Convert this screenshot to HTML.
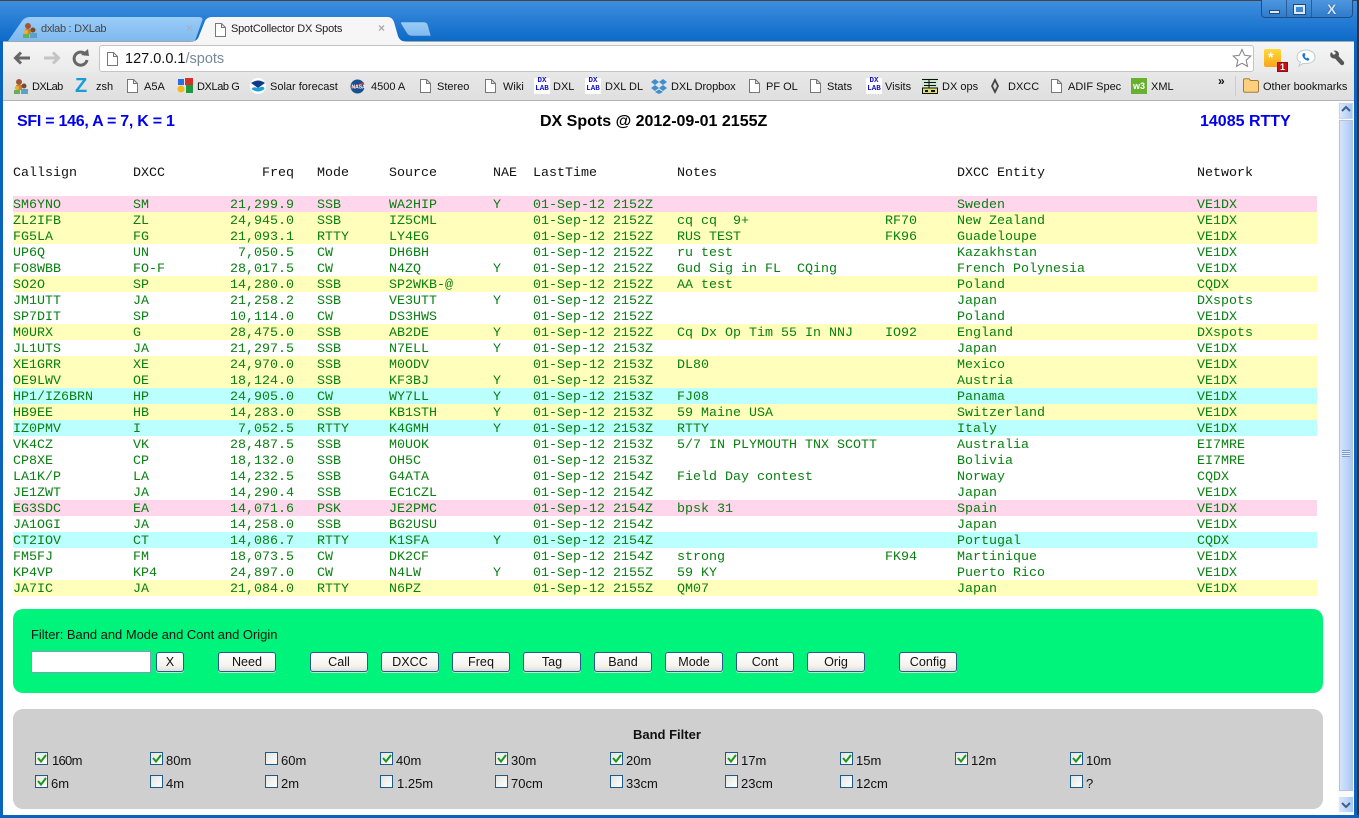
<!DOCTYPE html>
<html><head><meta charset="utf-8"><title>SpotCollector DX Spots</title>
<style>
html,body{margin:0;padding:0;width:1359px;height:818px;overflow:hidden;background:#fff}
body{position:relative;font-family:"Liberation Sans",sans-serif}
.a{position:absolute}
#top{left:0;top:0;width:1359px;height:42px;background:linear-gradient(#3f8ede,#0a69c8);border-top:1px solid #444;box-sizing:border-box}
#tool{left:3px;top:41px;width:1351px;height:31px;background:linear-gradient(#f5f5f5,#ebebeb);border-top:1px solid #9aa;box-sizing:border-box}
#bm{left:3px;top:72px;width:1351px;height:29px;background:linear-gradient(#e8e8e8,#dfdfdf);border-bottom:1px solid #b4b4b4;box-sizing:border-box}
.fr{background:#0a63bd;top:41px;bottom:0;width:3px}
.bm{position:absolute;top:80px;font-size:11px;line-height:14px;color:#111;white-space:nowrap}
.doc{position:absolute}
.dx{position:absolute;top:78px;width:16px;height:16px;background:#fff;color:#11c;font:bold 7.5px/7.5px "Liberation Mono",monospace;text-align:center}
.r{position:absolute;left:13px;width:1304px;height:16px;font:13.33px/16px "Liberation Mono",monospace;color:#087f10;white-space:pre}
.r span{position:absolute;top:2px}
.h{color:#111}
.c1{left:0}.c2{left:120px}.c3{left:204px;width:77px;text-align:right}.c4{left:304px}.c5{left:376px}.c6{left:480px}.c7{left:520px}.c8{left:664px}.c9{left:872px}.c10{left:944px}.c11{left:1184px}
.p{background:#ffd6ec}.y{background:#ffffbb}.b{background:#bbffff}
.btn{position:absolute;top:652px;width:58px;height:20px;box-sizing:border-box;border:1px solid #2a5a8a;border-radius:3px;background:linear-gradient(#fff,#f5f3ee 70%,#e2ded6);box-shadow:0 1px 0 #bfeed6;font-size:12.6px;line-height:19px;text-align:center;color:#111}
.cb{position:absolute;width:13px;height:13px;box-sizing:border-box;border:1px solid #1c5a8a;background:linear-gradient(135deg,#e4e4e0,#fff)}
.cb svg{position:absolute;left:1px;top:0}
.l{position:absolute;font-size:13px;line-height:15px;color:#111;white-space:nowrap}
</style></head><body>
<div class="a" id="top"></div>
<!-- window controls -->
<div class="a" style="left:1261px;top:0;width:92px;height:18px;border:1px solid #1d4f86;border-top:0;border-radius:0 0 4px 4px;box-sizing:border-box;background:linear-gradient(#4f96e0,#2f7ccb)"></div>
<div class="a" style="left:1286px;top:0;width:1px;height:17px;background:#2b5d94"></div>
<div class="a" style="left:1311px;top:0;width:1px;height:17px;background:#2b5d94"></div>
<div class="a" style="left:1269px;top:10px;width:11px;height:4px;background:#dfeaf8;border:1px solid #244a78;box-sizing:border-box"></div>
<div class="a" style="left:1294px;top:5px;width:11px;height:9px;border:2px solid #dfeaf8;outline:1px solid #244a78;box-sizing:border-box"></div>
<div class="a" style="left:1327px;top:1px;font:bold 14px/16px 'Liberation Sans',sans-serif;color:#cfe0f5;text-shadow:0 0 1px #123">X</div>

<div class="a" id="tool"></div>
<div class="a" id="bm"></div>
<!-- tabs -->
<svg class="a" style="left:0;top:0" width="440" height="43" viewBox="0 0 440 43">
<defs><linearGradient id="tg" x1="0" y1="0" x2="0" y2="1"><stop offset="0" stop-color="#9accf7"/><stop offset="1" stop-color="#7fb9f0"/></linearGradient></defs>
<path d="M8 41 L22 21 Q25 17 30 17 L198 17 Q204 17 202 21 L195 41 Z" fill="url(#tg)"/>
<path d="M190 42 Q197 42 199 36 L205 21 Q207 17 212 17 L388 17 Q392 17 394 22 L398 36 Q400 42 408 42 Z" fill="#f6f6f6"/>
<path d="M402 22 L424 22 Q427 22 428 25 L431 36 L412 36 Q408 36 406 32 L401 24 Q400 22 402 22 Z" fill="url(#tg)" stroke="#2d73b8" stroke-width=".6"/>
</svg>
<div class="a" style="left:41px;top:22px;font-size:11px;letter-spacing:-.3px;line-height:14px;color:#444;white-space:nowrap">dxlab : DXLab</div>
<div class="a" style="left:186px;top:21px;font:bold 12px/15px 'Liberation Sans',sans-serif;color:#9ab4cc">×</div>
<svg class="doc" style="left:215px;top:23px" width="11" height="14" viewBox="0 0 11 14"><path d="M.5 .5 H6.5 L10.5 4.5 V13.5 H.5 Z M6.5 .5 V4.5 H10.5" fill="#fff" stroke="#777"/></svg>
<div class="a" style="left:231px;top:22px;font-size:11px;letter-spacing:-.2px;line-height:14px;color:#222;white-space:nowrap">SpotCollector DX Spots</div>
<div class="a" style="left:378px;top:21px;font:bold 12px/15px 'Liberation Sans',sans-serif;color:#aaa">×</div>
<svg class="a" style="left:22px;top:22px" width="16" height="17" viewBox="0 0 16 17"><circle cx="6" cy="4" r="3" fill="#a0553a"/><rect x="3" y="7" width="6" height="5" fill="#c8862a"/><circle cx="11" cy="8" r="2.5" fill="#7a4a2a"/><rect x="8" y="11" width="7" height="5" fill="#5aa0c8"/><circle cx="4" cy="10" r="2.2" fill="#e8b030"/><rect x="1" y="12" width="6" height="4" fill="#60b060"/></svg>

<div class="a fr" style="left:0"></div>
<div class="a fr" style="left:1354px"></div>
<div class="a" style="left:1357px;top:0;bottom:0;width:2px;background:#333"></div>
<div class="a" style="left:0;top:815px;width:1359px;height:3px;background:#0a63bd"></div>
<!-- nav -->
<svg class="a" style="left:10px;top:46px" width="82" height="24" viewBox="0 0 82 24">
<path d="M20 12 H6 M11 6.5 L5.5 12 L11 17.5" fill="none" stroke="#666" stroke-width="3"/>
<path d="M34 12 H48 M43 6.5 L48.5 12 L43 17.5" fill="none" stroke="#c4c4c4" stroke-width="3"/>
<path d="M76 9 A6.5 6.5 0 1 0 77 14" fill="none" stroke="#666" stroke-width="3"/><path d="M71 9 L79 10 L78 3 Z" fill="#666"/>
</svg>
<div class="a" style="left:99px;top:45px;width:1155px;height:27px;background:#fff;border:1px solid #c4c4c4;border-radius:3px;box-sizing:border-box"></div>
<svg class="doc" style="left:107px;top:52px" width="11" height="14" viewBox="0 0 11 14"><path d="M.5 .5 H6.5 L10.5 4.5 V13.5 H.5 Z M6.5 .5 V4.5 H10.5" fill="#fff" stroke="#777"/></svg>
<div class="a" style="left:125px;top:51px;font-size:14.5px;line-height:17px;color:#111">127.0.0.1<span style="color:#789">/spots</span></div>
<svg class="a" style="left:1232px;top:48px" width="20" height="20" viewBox="0 0 20 20"><path d="M10 1.5 L12.6 7.3 L18.8 8 L14.2 12.2 L15.5 18.4 L10 15.2 L4.5 18.4 L5.8 12.2 L1.2 8 L7.4 7.3 Z" fill="#fff" stroke="#888" stroke-width="1.1"/></svg>
<div class="a" style="left:1264px;top:49px;width:17px;height:18px;border-radius:2px;background:linear-gradient(#ffd93a,#f9a51a)"></div>
<div class="a" style="left:1268px;top:50px;font:bold 14px/15px 'Liberation Sans',sans-serif;color:#fff">*</div>
<div class="a" style="left:1277px;top:62px;width:11px;height:10px;background:#c8101a;border:1px solid #811;box-sizing:border-box;font:bold 9px/9px 'Liberation Sans',sans-serif;color:#fff;text-align:center">1</div>
<svg class="a" style="left:1296px;top:49px" width="20" height="18" viewBox="0 0 20 18"><path d="M10 1 C15 1 19 4 19 8 C19 12 15 14.5 10 14.5 L7 14.5 L3 17 L4.5 13 C2 12 1 10 1 8 C1 4 5 1 10 1 Z" fill="#fff" stroke="#bcc" /><path d="M7 4.5 Q5.5 6 7.5 9 Q10 12 12.5 11.5 L13.5 10 L11.5 8.5 L10.5 9.5 Q9 8.5 8.5 7 L9.5 6 L8.5 4 Z" fill="#1670d0"/></svg>
<svg class="a" style="left:1329px;top:50px" width="16" height="17" viewBox="0 0 16 17"><path d="M2 2 L5 5 L7 3 L4.5 .8 Q8 0 9.5 2.5 Q10.5 4.5 9.5 6 L15 12 Q15.5 14 14 15 Q12.5 15.5 11.5 14.5 L6 8.5 Q3.5 9 1.8 7 Q.6 5 2 2 Z" fill="#555"/></svg>

<!-- bookmarks -->
<svg class="a" style="left:13px;top:78px" width="16" height="17" viewBox="0 0 16 17"><circle cx="6" cy="4" r="3" fill="#a0553a"/><rect x="3" y="7" width="6" height="5" fill="#c8862a"/><circle cx="11" cy="8" r="2.5" fill="#7a4a2a"/><rect x="8" y="11" width="7" height="5" fill="#5aa0c8"/><circle cx="4" cy="10" r="2.2" fill="#e8b030"/><rect x="1" y="12" width="6" height="4" fill="#60b060"/></svg>
<span class="bm" style="left:32px;letter-spacing:-.6px">DXLab</span>
<div class="a" style="left:75px;top:75px;font:bold 20px/22px 'Liberation Sans',sans-serif;color:#1a9bd6">Z</div>
<span class="bm" style="left:96px">zsh</span>
<svg class="doc" style="left:127px;top:79px" width="11" height="14" viewBox="0 0 11 14"><path d="M.5 .5 H6.5 L10.5 4.5 V13.5 H.5 Z M6.5 .5 V4.5 H10.5" fill="#fff" stroke="#777"/></svg><span class="bm" style="left:144px">A5A</span>
<svg class="a" style="left:177px;top:77px" width="16" height="17" viewBox="0 0 16 17"><rect x="8" y="1" width="8" height="7" fill="#d6302a"/><rect x="9" y="8" width="7" height="8" fill="#1c9a3e"/><rect x="1" y="2" width="6" height="6" fill="#2a6fe0"/><circle cx="4" cy="12" r="3.5" fill="#f5b818"/></svg>
<span class="bm" style="left:197px;letter-spacing:-.4px">DXLab G</span>
<svg class="a" style="left:250px;top:78px" width="16" height="16" viewBox="0 0 16 16"><circle cx="8" cy="8" r="8" fill="#fff"/><path d="M1 5 Q8 0 15 5 L8 10 Z" fill="#0d3b86"/><path d="M1.5 11 Q8 16 14.5 11 Q14 7 8 10 Q3 8 1.5 11 Z" fill="#19a0d8"/></svg>
<span class="bm" style="left:270px">Solar forecast</span>
<svg class="a" style="left:350px;top:79px" width="15" height="15" viewBox="0 0 15 15"><circle cx="7.5" cy="7.5" r="7" fill="#17508e"/><path d="M1 9 L14 4" stroke="#d33" stroke-width="1.5"/><text x="1.5" y="9.5" font-size="5" font-weight="bold" fill="#fff" font-family="Liberation Sans">NASA</text></svg>
<span class="bm" style="left:371px">4500 A</span>
<svg class="doc" style="left:420px;top:79px" width="11" height="14" viewBox="0 0 11 14"><path d="M.5 .5 H6.5 L10.5 4.5 V13.5 H.5 Z M6.5 .5 V4.5 H10.5" fill="#fff" stroke="#777"/></svg><span class="bm" style="left:437px">Stereo</span>
<svg class="doc" style="left:485px;top:79px" width="11" height="14" viewBox="0 0 11 14"><path d="M.5 .5 H6.5 L10.5 4.5 V13.5 H.5 Z M6.5 .5 V4.5 H10.5" fill="#fff" stroke="#777"/></svg><span class="bm" style="left:503px">Wiki</span>
<div class="dx" style="left:534px">DX<br>LAB</div><span class="bm" style="left:553px">DXL</span>
<div class="dx" style="left:585px">DX<br>LAB</div><span class="bm" style="left:605px">DXL DL</span>
<svg class="a" style="left:650px;top:77px" width="18" height="18" viewBox="0 0 18 18"><path d="M5 2 L9 5 L5 8 L1 5 Z M13 2 L17 5 L13 8 L9 5 Z M5 8 L9 11 L5 14 L1 11 Z M13 8 L17 11 L13 14 L9 11 Z M5 15 L9 12.5 L13 15 L9 17 Z" fill="#3f8fd0"/></svg>
<span class="bm" style="left:671px;letter-spacing:-.1px">DXL Dropbox</span>
<svg class="doc" style="left:749px;top:79px" width="11" height="14" viewBox="0 0 11 14"><path d="M.5 .5 H6.5 L10.5 4.5 V13.5 H.5 Z M6.5 .5 V4.5 H10.5" fill="#fff" stroke="#777"/></svg><span class="bm" style="left:766px">PF OL</span>
<svg class="doc" style="left:810px;top:79px" width="11" height="14" viewBox="0 0 11 14"><path d="M.5 .5 H6.5 L10.5 4.5 V13.5 H.5 Z M6.5 .5 V4.5 H10.5" fill="#fff" stroke="#777"/></svg><span class="bm" style="left:827px">Stats</span>
<div class="dx" style="left:866px">DX<br>LAB</div><span class="bm" style="left:885px">Visits</span>
<svg class="a" style="left:922px;top:78px" width="16" height="16" viewBox="0 0 16 16"><rect width="16" height="16" fill="#cfe6cf"/><path d="M0 1.5 H16 M7 1.5 V10 M2 4.5 H14 M2 7.5 H14" stroke="#111"/><rect x=".5" y="10" width="15" height="5.5" fill="#dde070" stroke="#111"/><rect x="3" y="12" width="3" height="2" fill="#111"/><rect x="9" y="12" width="4" height="2" fill="#111"/></svg>
<span class="bm" style="left:942px">DX ops</span>
<svg class="a" style="left:990px;top:78px" width="10" height="16" viewBox="0 0 10 16"><path d="M5 0 L9 8 L5 16 L1 8 Z" fill="#444"/><path d="M5 4 L7 8 L5 12 L3 8 Z" fill="#ddd"/></svg>
<span class="bm" style="left:1008px">DXCC</span>
<svg class="doc" style="left:1051px;top:79px" width="11" height="14" viewBox="0 0 11 14"><path d="M.5 .5 H6.5 L10.5 4.5 V13.5 H.5 Z M6.5 .5 V4.5 H10.5" fill="#fff" stroke="#777"/></svg><span class="bm" style="left:1068px">ADIF Spec</span>
<div class="a" style="left:1131px;top:78px;width:16px;height:16px;background:#68b030;color:#fff;font:bold 9px/16px 'Liberation Sans',sans-serif;text-align:center">w3</div>
<span class="bm" style="left:1151px">XML</span>
<div class="a" style="left:1218px;top:74px;font:bold 12px/14px 'Liberation Sans',sans-serif;color:#111">»</div>
<div class="a" style="left:1235px;top:76px;width:1px;height:20px;background:#ccc"></div>
<svg class="a" style="left:1243px;top:78px" width="16" height="15" viewBox="0 0 16 15"><path d="M.5 2 Q.5 .8 2 .8 L6 .8 L7.5 2.5 L14 2.5 Q15.5 2.5 15.5 4 L15.5 13 Q15.5 14.2 14 14.2 L2 14.2 Q.5 14.2 .5 13 Z" fill="#fbd07f" stroke="#a77a3a"/></svg>
<span class="bm" style="left:1263px">Other bookmarks</span>

<!-- scrollbar -->
<div class="a" style="left:1338px;top:101px;width:16px;height:714px;background:#fafafa"></div>
<div class="a" style="left:1339px;top:103px;width:14px;height:16px;background:linear-gradient(90deg,#dbe8fb,#a8c8f4);border:1px solid #c8d4e8;box-sizing:border-box"></div>
<div class="a" style="left:1339px;top:120px;width:14px;height:671px;background:linear-gradient(90deg,#d5e4fb,#bcd4f9 60%,#aac8f4);border:1px solid #b4c2da;box-sizing:border-box"></div>
<div class="a" style="left:1339px;top:797px;width:14px;height:15px;background:linear-gradient(90deg,#dbe8fb,#a8c8f4)"></div>
<svg class="a" style="left:1341px;top:105px" width="10" height="8" viewBox="0 0 10 8"><path d="M1 6 L5 2 L9 6" fill="none" stroke="#3d5f8e" stroke-width="2"/></svg>
<svg class="a" style="left:1341px;top:801px" width="10" height="8" viewBox="0 0 10 8"><path d="M1 2 L5 6 L9 2" fill="none" stroke="#3d5f8e" stroke-width="2"/></svg>
<div class="a" style="left:1342px;top:450px;width:8px;height:7px;background:repeating-linear-gradient(#7e9cc8 0 1px,#dfe9fa 1px 2px)"></div>

<!-- page header -->
<div class="a" style="left:17px;top:113px;font:bold 16px/18px 'Liberation Sans',sans-serif;letter-spacing:-.27px;color:#0000ee;white-space:nowrap">SFI = 146, A = 7, K = 1</div>
<div class="a" style="left:540px;top:113px;font:bold 16px/18px 'Liberation Sans',sans-serif;color:#000;white-space:nowrap">DX Spots @ 2012-09-01 2155Z</div>
<div class="a" style="left:1200px;top:113px;font:bold 16px/18px 'Liberation Sans',sans-serif;color:#0000ee;white-space:nowrap">14085 RTTY</div>

<div class="r h" style="top:164px"><span class="c1">Callsign</span><span class="c2">DXCC</span><span class="c3">Freq</span><span class="c4">Mode</span><span class="c5">Source</span><span class="c6">NAE</span><span class="c7">LastTime</span><span class="c8">Notes</span><span class="c10">DXCC Entity</span><span class="c11">Network</span></div>

<div class="r p" style="top:196px"><span class="c1">SM6YNO</span><span class="c2">SM</span><span class="c3">21,299.9</span><span class="c4">SSB</span><span class="c5">WA2HIP</span><span class="c6">Y</span><span class="c7">01-Sep-12 2152Z</span><span class="c10">Sweden</span><span class="c11">VE1DX</span></div>
<div class="r y" style="top:212px"><span class="c1">ZL2IFB</span><span class="c2">ZL</span><span class="c3">24,945.0</span><span class="c4">SSB</span><span class="c5">IZ5CML</span><span class="c7">01-Sep-12 2152Z</span><span class="c8">cq cq  9+</span><span class="c9">RF70</span><span class="c10">New Zealand</span><span class="c11">VE1DX</span></div>
<div class="r y" style="top:228px"><span class="c1">FG5LA</span><span class="c2">FG</span><span class="c3">21,093.1</span><span class="c4">RTTY</span><span class="c5">LY4EG</span><span class="c7">01-Sep-12 2152Z</span><span class="c8">RUS TEST</span><span class="c9">FK96</span><span class="c10">Guadeloupe</span><span class="c11">VE1DX</span></div>
<div class="r" style="top:244px"><span class="c1">UP6Q</span><span class="c2">UN</span><span class="c3">7,050.5</span><span class="c4">CW</span><span class="c5">DH6BH</span><span class="c7">01-Sep-12 2152Z</span><span class="c8">ru test</span><span class="c10">Kazakhstan</span><span class="c11">VE1DX</span></div>
<div class="r" style="top:260px"><span class="c1">FO8WBB</span><span class="c2">FO-F</span><span class="c3">28,017.5</span><span class="c4">CW</span><span class="c5">N4ZQ</span><span class="c6">Y</span><span class="c7">01-Sep-12 2152Z</span><span class="c8">Gud Sig in FL  CQing</span><span class="c10">French Polynesia</span><span class="c11">VE1DX</span></div>
<div class="r y" style="top:276px"><span class="c1">SO2O</span><span class="c2">SP</span><span class="c3">14,280.0</span><span class="c4">SSB</span><span class="c5">SP2WKB-@</span><span class="c7">01-Sep-12 2152Z</span><span class="c8">AA test</span><span class="c10">Poland</span><span class="c11">CQDX</span></div>
<div class="r" style="top:292px"><span class="c1">JM1UTT</span><span class="c2">JA</span><span class="c3">21,258.2</span><span class="c4">SSB</span><span class="c5">VE3UTT</span><span class="c6">Y</span><span class="c7">01-Sep-12 2152Z</span><span class="c10">Japan</span><span class="c11">DXspots</span></div>
<div class="r" style="top:308px"><span class="c1">SP7DIT</span><span class="c2">SP</span><span class="c3">10,114.0</span><span class="c4">CW</span><span class="c5">DS3HWS</span><span class="c7">01-Sep-12 2152Z</span><span class="c10">Poland</span><span class="c11">VE1DX</span></div>
<div class="r y" style="top:324px"><span class="c1">M0URX</span><span class="c2">G</span><span class="c3">28,475.0</span><span class="c4">SSB</span><span class="c5">AB2DE</span><span class="c6">Y</span><span class="c7">01-Sep-12 2152Z</span><span class="c8">Cq Dx Op Tim 55 In NNJ</span><span class="c9">IO92</span><span class="c10">England</span><span class="c11">DXspots</span></div>
<div class="r" style="top:340px"><span class="c1">JL1UTS</span><span class="c2">JA</span><span class="c3">21,297.5</span><span class="c4">SSB</span><span class="c5">N7ELL</span><span class="c6">Y</span><span class="c7">01-Sep-12 2153Z</span><span class="c10">Japan</span><span class="c11">VE1DX</span></div>
<div class="r y" style="top:356px"><span class="c1">XE1GRR</span><span class="c2">XE</span><span class="c3">24,970.0</span><span class="c4">SSB</span><span class="c5">M0ODV</span><span class="c7">01-Sep-12 2153Z</span><span class="c8">DL80</span><span class="c10">Mexico</span><span class="c11">VE1DX</span></div>
<div class="r y" style="top:372px"><span class="c1">OE9LWV</span><span class="c2">OE</span><span class="c3">18,124.0</span><span class="c4">SSB</span><span class="c5">KF3BJ</span><span class="c6">Y</span><span class="c7">01-Sep-12 2153Z</span><span class="c10">Austria</span><span class="c11">VE1DX</span></div>
<div class="r b" style="top:388px"><span class="c1">HP1/IZ6BRN</span><span class="c2">HP</span><span class="c3">24,905.0</span><span class="c4">CW</span><span class="c5">WY7LL</span><span class="c6">Y</span><span class="c7">01-Sep-12 2153Z</span><span class="c8">FJ08</span><span class="c10">Panama</span><span class="c11">VE1DX</span></div>
<div class="r y" style="top:404px"><span class="c1">HB9EE</span><span class="c2">HB</span><span class="c3">14,283.0</span><span class="c4">SSB</span><span class="c5">KB1STH</span><span class="c6">Y</span><span class="c7">01-Sep-12 2153Z</span><span class="c8">59 Maine USA</span><span class="c10">Switzerland</span><span class="c11">VE1DX</span></div>
<div class="r b" style="top:420px"><span class="c1">IZ0PMV</span><span class="c2">I</span><span class="c3">7,052.5</span><span class="c4">RTTY</span><span class="c5">K4GMH</span><span class="c6">Y</span><span class="c7">01-Sep-12 2153Z</span><span class="c8">RTTY</span><span class="c10">Italy</span><span class="c11">VE1DX</span></div>
<div class="r" style="top:436px"><span class="c1">VK4CZ</span><span class="c2">VK</span><span class="c3">28,487.5</span><span class="c4">SSB</span><span class="c5">M0UOK</span><span class="c7">01-Sep-12 2153Z</span><span class="c8">5/7 IN PLYMOUTH TNX SCOTT</span><span class="c10">Australia</span><span class="c11">EI7MRE</span></div>
<div class="r" style="top:452px"><span class="c1">CP8XE</span><span class="c2">CP</span><span class="c3">18,132.0</span><span class="c4">SSB</span><span class="c5">OH5C</span><span class="c7">01-Sep-12 2153Z</span><span class="c10">Bolivia</span><span class="c11">EI7MRE</span></div>
<div class="r" style="top:468px"><span class="c1">LA1K/P</span><span class="c2">LA</span><span class="c3">14,232.5</span><span class="c4">SSB</span><span class="c5">G4ATA</span><span class="c7">01-Sep-12 2154Z</span><span class="c8">Field Day contest</span><span class="c10">Norway</span><span class="c11">CQDX</span></div>
<div class="r" style="top:484px"><span class="c1">JE1ZWT</span><span class="c2">JA</span><span class="c3">14,290.4</span><span class="c4">SSB</span><span class="c5">EC1CZL</span><span class="c7">01-Sep-12 2154Z</span><span class="c10">Japan</span><span class="c11">VE1DX</span></div>
<div class="r p" style="top:500px"><span class="c1">EG3SDC</span><span class="c2">EA</span><span class="c3">14,071.6</span><span class="c4">PSK</span><span class="c5">JE2PMC</span><span class="c7">01-Sep-12 2154Z</span><span class="c8">bpsk 31</span><span class="c10">Spain</span><span class="c11">VE1DX</span></div>
<div class="r" style="top:516px"><span class="c1">JA1OGI</span><span class="c2">JA</span><span class="c3">14,258.0</span><span class="c4">SSB</span><span class="c5">BG2USU</span><span class="c7">01-Sep-12 2154Z</span><span class="c10">Japan</span><span class="c11">VE1DX</span></div>
<div class="r b" style="top:532px"><span class="c1">CT2IOV</span><span class="c2">CT</span><span class="c3">14,086.7</span><span class="c4">RTTY</span><span class="c5">K1SFA</span><span class="c6">Y</span><span class="c7">01-Sep-12 2154Z</span><span class="c10">Portugal</span><span class="c11">CQDX</span></div>
<div class="r" style="top:548px"><span class="c1">FM5FJ</span><span class="c2">FM</span><span class="c3">18,073.5</span><span class="c4">CW</span><span class="c5">DK2CF</span><span class="c7">01-Sep-12 2154Z</span><span class="c8">strong</span><span class="c9">FK94</span><span class="c10">Martinique</span><span class="c11">VE1DX</span></div>
<div class="r" style="top:564px"><span class="c1">KP4VP</span><span class="c2">KP4</span><span class="c3">24,897.0</span><span class="c4">CW</span><span class="c5">N4LW</span><span class="c6">Y</span><span class="c7">01-Sep-12 2155Z</span><span class="c8">59 KY</span><span class="c10">Puerto Rico</span><span class="c11">VE1DX</span></div>
<div class="r y" style="top:580px"><span class="c1">JA7IC</span><span class="c2">JA</span><span class="c3">21,084.0</span><span class="c4">RTTY</span><span class="c5">N6PZ</span><span class="c7">01-Sep-12 2155Z</span><span class="c8">QM07</span><span class="c10">Japan</span><span class="c11">VE1DX</span></div>

<!-- green panel -->
<div class="a" style="left:13px;top:609px;width:1310px;height:84px;background:#00f47c;border-radius:10px"></div>
<div class="a" style="left:31px;top:627px;font-size:12.93px;line-height:16px;color:#111;white-space:nowrap">Filter: Band and Mode and Cont and Origin</div>
<div class="a" style="left:31px;top:651px;width:120px;height:22px;background:#fff;border:1px solid #7f9db9;box-sizing:border-box"></div>
<div class="btn" style="left:156px;width:28px">X</div>
<div class="btn" style="left:218px">Need</div>
<div class="btn" style="left:310px">Call</div>
<div class="btn" style="left:381px">DXCC</div>
<div class="btn" style="left:452px">Freq</div>
<div class="btn" style="left:523px">Tag</div>
<div class="btn" style="left:594px">Band</div>
<div class="btn" style="left:665px">Mode</div>
<div class="btn" style="left:736px">Cont</div>
<div class="btn" style="left:807px">Orig</div>
<div class="btn" style="left:899px">Config</div>

<!-- gray panel -->
<div class="a" style="left:13px;top:709px;width:1310px;height:100px;background:#cfcfcf;border-radius:10px"></div>
<div class="a" style="left:633px;top:727px;font:bold 13px/16px 'Liberation Sans',sans-serif;color:#111">Band Filter</div>

<div class="cb" style="left:35px;top:752px"><svg width="10" height="11" viewBox="0 0 10 11"><path d="M1 5 L4 8.5 L9 2" fill="none" stroke="#1a9a1a" stroke-width="2"/></svg></div><span class="l" style="left:52px;top:753px;letter-spacing:-.7px">160m</span>
<div class="cb" style="left:150px;top:752px"><svg width="10" height="11" viewBox="0 0 10 11"><path d="M1 5 L4 8.5 L9 2" fill="none" stroke="#1a9a1a" stroke-width="2"/></svg></div><span class="l" style="left:166px;top:753px">80m</span>
<div class="cb" style="left:265px;top:752px"></div><span class="l" style="left:281px;top:753px">60m</span>
<div class="cb" style="left:380px;top:752px"><svg width="10" height="11" viewBox="0 0 10 11"><path d="M1 5 L4 8.5 L9 2" fill="none" stroke="#1a9a1a" stroke-width="2"/></svg></div><span class="l" style="left:396px;top:753px">40m</span>
<div class="cb" style="left:495px;top:752px"><svg width="10" height="11" viewBox="0 0 10 11"><path d="M1 5 L4 8.5 L9 2" fill="none" stroke="#1a9a1a" stroke-width="2"/></svg></div><span class="l" style="left:511px;top:753px">30m</span>
<div class="cb" style="left:610px;top:752px"><svg width="10" height="11" viewBox="0 0 10 11"><path d="M1 5 L4 8.5 L9 2" fill="none" stroke="#1a9a1a" stroke-width="2"/></svg></div><span class="l" style="left:626px;top:753px">20m</span>
<div class="cb" style="left:725px;top:752px"><svg width="10" height="11" viewBox="0 0 10 11"><path d="M1 5 L4 8.5 L9 2" fill="none" stroke="#1a9a1a" stroke-width="2"/></svg></div><span class="l" style="left:741px;top:753px">17m</span>
<div class="cb" style="left:840px;top:752px"><svg width="10" height="11" viewBox="0 0 10 11"><path d="M1 5 L4 8.5 L9 2" fill="none" stroke="#1a9a1a" stroke-width="2"/></svg></div><span class="l" style="left:856px;top:753px">15m</span>
<div class="cb" style="left:955px;top:752px"><svg width="10" height="11" viewBox="0 0 10 11"><path d="M1 5 L4 8.5 L9 2" fill="none" stroke="#1a9a1a" stroke-width="2"/></svg></div><span class="l" style="left:971px;top:753px">12m</span>
<div class="cb" style="left:1070px;top:752px"><svg width="10" height="11" viewBox="0 0 10 11"><path d="M1 5 L4 8.5 L9 2" fill="none" stroke="#1a9a1a" stroke-width="2"/></svg></div><span class="l" style="left:1086px;top:753px">10m</span>

<div class="cb" style="left:35px;top:775px"><svg width="10" height="11" viewBox="0 0 10 11"><path d="M1 5 L4 8.5 L9 2" fill="none" stroke="#1a9a1a" stroke-width="2"/></svg></div><span class="l" style="left:51px;top:776px">6m</span>
<div class="cb" style="left:150px;top:775px"></div><span class="l" style="left:166px;top:776px">4m</span>
<div class="cb" style="left:265px;top:775px"></div><span class="l" style="left:281px;top:776px">2m</span>
<div class="cb" style="left:380px;top:775px"></div><span class="l" style="left:397px;top:776px">1.25m</span>
<div class="cb" style="left:495px;top:775px"></div><span class="l" style="left:511px;top:776px">70cm</span>
<div class="cb" style="left:610px;top:775px"></div><span class="l" style="left:626px;top:776px">33cm</span>
<div class="cb" style="left:725px;top:775px"></div><span class="l" style="left:741px;top:776px">23cm</span>
<div class="cb" style="left:840px;top:775px"></div><span class="l" style="left:856px;top:776px">12cm</span>
<div class="cb" style="left:1070px;top:775px"></div><span class="l" style="left:1086px;top:776px">?</span>
</body></html>
